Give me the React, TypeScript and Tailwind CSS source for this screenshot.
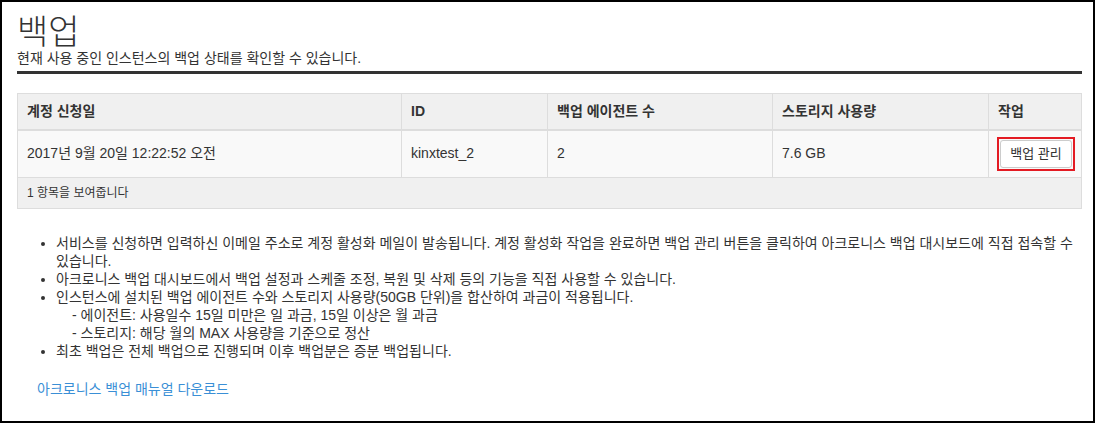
export default function App() {
  const font = {
    fontFamily: '"Liberation Sans", "Noto Sans CJK KR", sans-serif',
  };

  const notes = [
    "서비스를 신청하면 입력하신 이메일 주소로 계정 활성화 메일이 발송됩니다. 계정 활성화 작업을 완료하면 백업 관리 버튼을 클릭하여 아크로니스 백업 대시보드에 직접 접속할 수 있습니다.",
    "아크로니스 백업 대시보드에서 백업 설정과 스케줄 조정, 복원 및 삭제 등의 기능을 직접 사용할 수 있습니다.",
  ];

  return (
    <div
      className="h-[423px] w-[1095px] border-2 border-black bg-white pl-[15px] pr-[11px] text-[#333]"
      style={font}
    >
      <div className="border-b-[3px] border-[#333] pb-[4px] pt-[12px]">
        <h1 className="text-[34px] leading-[36px] font-light">백업</h1>
        <p className="-mt-[1px] text-[14px] leading-[18px]">
          현재 사용 중인 인스턴스의 백업 상태를 확인할 수 있습니다.
        </p>
      </div>

      <table className="mt-[19px] w-full table-fixed border-collapse border border-[#ddd] text-[14px]">
        <colgroup>
          <col className="w-[384px]" />
          <col className="w-[146px]" />
          <col className="w-[225px]" />
          <col className="w-[216px]" />
          <col />
        </colgroup>
        <thead>
          <tr className="h-[36px] border-b-2 border-[#ddd] bg-[#f0f0f0] text-left">
            <th className="border-r border-[#ddd] px-[9px] font-bold">계정 신청일</th>
            <th className="border-r border-[#ddd] px-[9px] font-bold">ID</th>
            <th className="border-r border-[#ddd] px-[9px] font-bold">백업 에이전트 수</th>
            <th className="border-r border-[#ddd] px-[9px] font-bold">스토리지 사용량</th>
            <th className="px-[9px] font-bold">작업</th>
          </tr>
        </thead>
        <tbody>
          <tr className="h-[48px] border-b border-[#ddd] bg-[#f9f9f9]">
            <td className="border-r border-[#ddd] px-[9px]">2017년 9월 20일 12:22:52 오전</td>
            <td className="border-r border-[#ddd] px-[9px]">kinxtest_2</td>
            <td className="border-r border-[#ddd] px-[9px]">2</td>
            <td className="border-r border-[#ddd] px-[9px]">7.6 GB</td>
            <td className="px-[8px]">
              <div className="inline-block border-2 border-[#e31b23] p-[1px] align-middle">
                <button className="block h-[28px] w-[72px] rounded-[3px] border border-[#ccc] bg-white text-[13px]">
                  백업 관리
                </button>
              </div>
            </td>
          </tr>
        </tbody>
        <tfoot>
          <tr className="h-[31px] bg-[#f0f0f0]">
            <td colSpan={5} className="px-[9px] text-[12px]">
              1 항목을 보여줍니다
            </td>
          </tr>
        </tfoot>
      </table>

      <ul className="mt-[25px] list-disc pl-[39px] text-[14px] leading-[18px]">
        {notes.map((n) => (
          <li key={n}>{n}</li>
        ))}
        <li>
          인스턴스에 설치된 백업 에이전트 수와 스토리지 사용량(50GB 단위)을 합산하여 과금이 적용됩니다.
          <div className="pl-[16px]">- 에이전트: 사용일수 15일 미만은 일 과금, 15일 이상은 월 과금</div>
          <div className="pl-[16px]">- 스토리지: 해당 월의 MAX 사용량을 기준으로 정산</div>
        </li>
        <li>최초 백업은 전체 백업으로 진행되며 이후 백업분은 증분 백업됩니다.</li>
      </ul>

      <a className="mt-[20px] ml-[20px] block w-fit text-[14px] leading-[18px] text-[#3a8fd6]">
        아크로니스 백업 매뉴얼 다운로드
      </a>
    </div>
  );
}
